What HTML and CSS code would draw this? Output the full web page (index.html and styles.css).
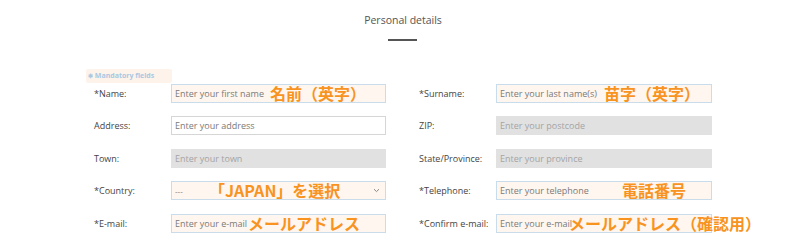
FILE: index.html
```html
<!DOCTYPE html>
<html lang="ja">
<head>
    <meta charset="UTF-8">
    <meta name="viewport" content="width=device-width, initial-scale=1.0">
    <title>Personal details</title>
    <link rel="stylesheet" href="styles.css">
</head>
<body>
    <div class="page">
        <h2 class="section-title">Personal details</h2>
        <div class="title-rule"></div>

        <div class="mandatory"><span class="star">✱</span> Mandatory fields</div>

        <div class="form-grid">
            <label class="field-label">*Name:</label>
            <div class="field">
                <input class="input required" placeholder="Enter your first name">
                <span class="note note-name">名前（英字）</span>
            </div>
            <div></div>
            <label class="field-label">*Surname:</label>
            <div class="field">
                <input class="input required" placeholder="Enter your last name(s)">
                <span class="note note-surname">苗字（英字）</span>
            </div>

            <label class="field-label">Address:</label>
            <div class="field">
                <input class="input" placeholder="Enter your address">
            </div>
            <div></div>
            <label class="field-label">ZIP:</label>
            <div class="field">
                <input class="input disabled" placeholder="Enter your postcode" disabled>
            </div>

            <label class="field-label">Town:</label>
            <div class="field">
                <input class="input disabled" placeholder="Enter your town" disabled>
            </div>
            <div></div>
            <label class="field-label">State/Province:</label>
            <div class="field">
                <input class="input disabled" placeholder="Enter your province" disabled>
            </div>

            <label class="field-label">*Country:</label>
            <div class="field">
                <div class="input required select">
                    <span class="select-value">---</span>
                    <svg class="chevron" width="7" height="5" viewBox="0 0 7 5"><path d="M1 1.2 L3.5 3.6 L6 1.2" fill="none" stroke="#888" stroke-width="1"/></svg>
                </div>
                <span class="note note-country">「JAPAN」を選択</span>
            </div>
            <div></div>
            <label class="field-label">*Telephone:</label>
            <div class="field">
                <input class="input required" placeholder="Enter your telephone">
                <span class="note note-phone">電話番号</span>
            </div>

            <label class="field-label">*E-mail:</label>
            <div class="field">
                <input class="input required" placeholder="Enter your e-mail">
                <span class="note note-email">メールアドレス</span>
            </div>
            <div></div>
            <label class="field-label">*Confirm e-mail:</label>
            <div class="field">
                <input class="input required" placeholder="Enter your e-mail">
                <span class="note note-confirm">メールアドレス（確認用）</span>
            </div>
        </div>
    </div>
</body>
</html>
```

FILE: styles.css
```css
body {
    margin: 0;
    background: #ffffff;
    font-family: 'Open Sans', 'Noto Sans', sans-serif;
    color: #444444;
}
.page {
    width: 800px;
    padding-top: 13px;
}
.section-title {
    margin: 0;
    text-align: center;
    font-size: 10.5px;
    font-weight: 400;
    line-height: 15px;
    color: #555555;
    padding-left: 6px;
}
.title-rule {
    width: 29px;
    height: 2px;
    background: #555555;
    margin: 11px 0 0 388px;
}
.mandatory {
    margin: 28px 0 0 86px;
    width: 84px;
    height: 14px;
    padding-left: 2px;
    background: #fdf3ea;
    border-radius: 2px;
    font-size: 7px;
    font-weight: 700;
    line-height: 14px;
    color: #a9c8e2;
}
.star {
    font-size: 6px;
}
.form-grid {
    display: grid;
    grid-template-columns: 77px 215px 33px 77px 216px;
    grid-auto-rows: 19px;
    row-gap: 13.5px;
    margin: 0.5px 0 0 94px;
}
.field-label {
    display: block;
    font-size: 9px;
    line-height: 19px;
    color: #444444;
}
.field {
    position: relative;
    height: 19px;
}
.input {
    display: block;
    box-sizing: border-box;
    width: 100%;
    height: 19px;
    margin: 0;
    padding: 0 3px;
    border: 1px solid #d6d6d6;
    background: #ffffff;
    font-family: 'Open Sans', 'Noto Sans', sans-serif;
    font-size: 9px;
    color: #555555;
    outline: none;
}
.input::placeholder {
    color: #7a7a7a;
}
.required {
    background: #fff6ef;
    border-color: #c9dcec;
}
.disabled {
    background: #e1e1e1;
    border-color: #e1e1e1;
}
.disabled::placeholder {
    color: #a4a4a4;
}
.select {
    display: flex;
    align-items: center;
    justify-content: space-between;
    padding-right: 5px;
}
.select-value {
    font-size: 8px;
    color: #777777;
}
.note {
    position: absolute;
    top: -1px;
    font-family: 'Noto Sans CJK JP', 'Noto Sans', sans-serif;
    font-size: 16px;
    font-weight: 700;
    line-height: 20px;
    color: #f7931e;
    white-space: nowrap;
}
.note-name { left: 99px; }
.note-surname { left: 108px; }
.note-country { left: 38px; }
.note-email { left: 77px; }
.note-phone { left: 126px; }
.note-confirm { left: 73px; }
```
